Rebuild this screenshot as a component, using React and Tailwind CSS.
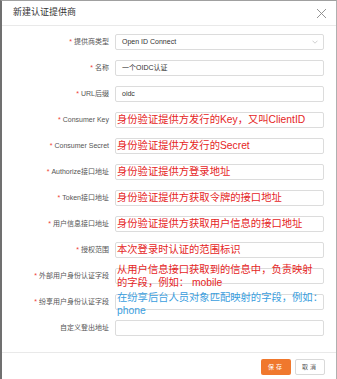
import React from "react";

const rows = [
  { label: "提供商类型", req: true, type: "select", value: "Open ID Connect" },
  { label: "名称", req: true, value: "一个OIDC认证" },
  { label: "URL后缀", req: true, value: "oidc" },
  { label: "Consumer Key", req: true, note: "身份验证提供方发行的Key，又叫ClientID" },
  { label: "Consumer Secret", req: true, note: "身份验证提供方发行的Secret" },
  { label: "Authorize接口地址", req: true, note: "身份验证提供方登录地址" },
  { label: "Token接口地址", req: true, note: "身份验证提供方获取令牌的接口地址" },
  { label: "用户信息接口地址", req: true, note: "身份验证提供方获取用户信息的接口地址" },
  { label: "授权范围", req: true, note: "本次登录时认证的范围标识" },
  { label: "外部用户身份认证字段", req: true, multi: "red" },
  { label: "纷享用户身份认证字段", req: true, multi: "blue" },
  { label: "自定义登出地址", req: false },
];

const font = { fontFamily: '"Liberation Sans", "Noto Sans CJK SC", sans-serif' };

function Field({ r }) {
  return (
    <div className="relative h-[16px] w-[209px] rounded-[2px] border border-[#dcdcdc] bg-white">
      {r.type === "select" && (
        <div className="flex h-full items-center justify-between pl-[6px] pr-[5px]">
          <span className="text-[7px] text-[#333]">{r.value}</span>
          <svg width="6" height="4" viewBox="0 0 6 4" fill="none">
            <path d="M0.5 0.7 L3 3.2 L5.5 0.7" stroke="#bbb" strokeWidth="0.7" />
          </svg>
        </div>
      )}
      {r.value && r.type !== "select" && (
        <div className="flex h-full items-center pl-[6px] text-[7px] text-[#333]">{r.value}</div>
      )}
      {r.note && (
        <div className="absolute left-[1px] top-[-1px] whitespace-nowrap text-[10.3px] leading-[16px] text-[#e5251e]">
          {r.note}
        </div>
      )}
      {r.multi === "red" && (
        <div className="absolute left-[1px] top-[-6px] whitespace-nowrap text-[10.3px] leading-[13px] text-[#e5251e]">
          从用户信息接口获取到的信息中，负责映射
          <br />
          的字段，例如： mobile
        </div>
      )}
      {r.multi === "blue" && (
        <div className="absolute left-[1px] top-[-3px] whitespace-nowrap text-[10.3px] leading-[12.5px] text-[#3a9ede]">
          在纷享后台人员对象匹配映射的字段，例如：
          <br />
          phone
        </div>
      )}
    </div>
  );
}

export default function App() {
  return (
    <div
      className="h-[379px] w-[337px] overflow-hidden border-l-2 border-t border-r border-l-[#707070] border-t-[#a0a0a0] border-r-[#b0b0b0] bg-white"
      style={font}
    >
      <div className="flex h-[25px] items-center justify-between border-b border-[#e9e9e9] pl-[11px] pr-[9px]">
        <span className="text-[9px] text-[#333]">新建认证提供商</span>
        <svg width="11" height="11" viewBox="0 0 11 11" fill="none">
          <path d="M1 1 L10 10 M10 1 L1 10" stroke="#888" strokeWidth="0.9" />
        </svg>
      </div>
      <div className="flex flex-col gap-[10px] pb-[16px] pt-[8px]">
        {rows.map((r, i) => (
          <div key={i} className="flex h-[16px] items-center">
            <div className="w-[107px] whitespace-nowrap text-right text-[7px] text-[#555]">
              {r.req && <span className="mr-[2px] text-[#f04134]">*</span>}
              {r.label}
            </div>
            <div className="ml-[6px]">
              <Field r={r} />
            </div>
          </div>
        ))}
      </div>
      <div className="flex justify-end gap-[4px] border-t border-[#e9e9e9] pr-[11px] pt-[6px]">
        <button className="flex h-[16px] w-[30px] items-center justify-center rounded-[2px] bg-[#f0782d] text-[6px] tracking-[2px] text-white">
          保存
        </button>
        <button className="flex h-[16px] w-[30px] items-center justify-center rounded-[2px] border border-[#d9d9d9] bg-white text-[6px] tracking-[2px] text-[#555]">
          取消
        </button>
      </div>
    </div>
  );
}
